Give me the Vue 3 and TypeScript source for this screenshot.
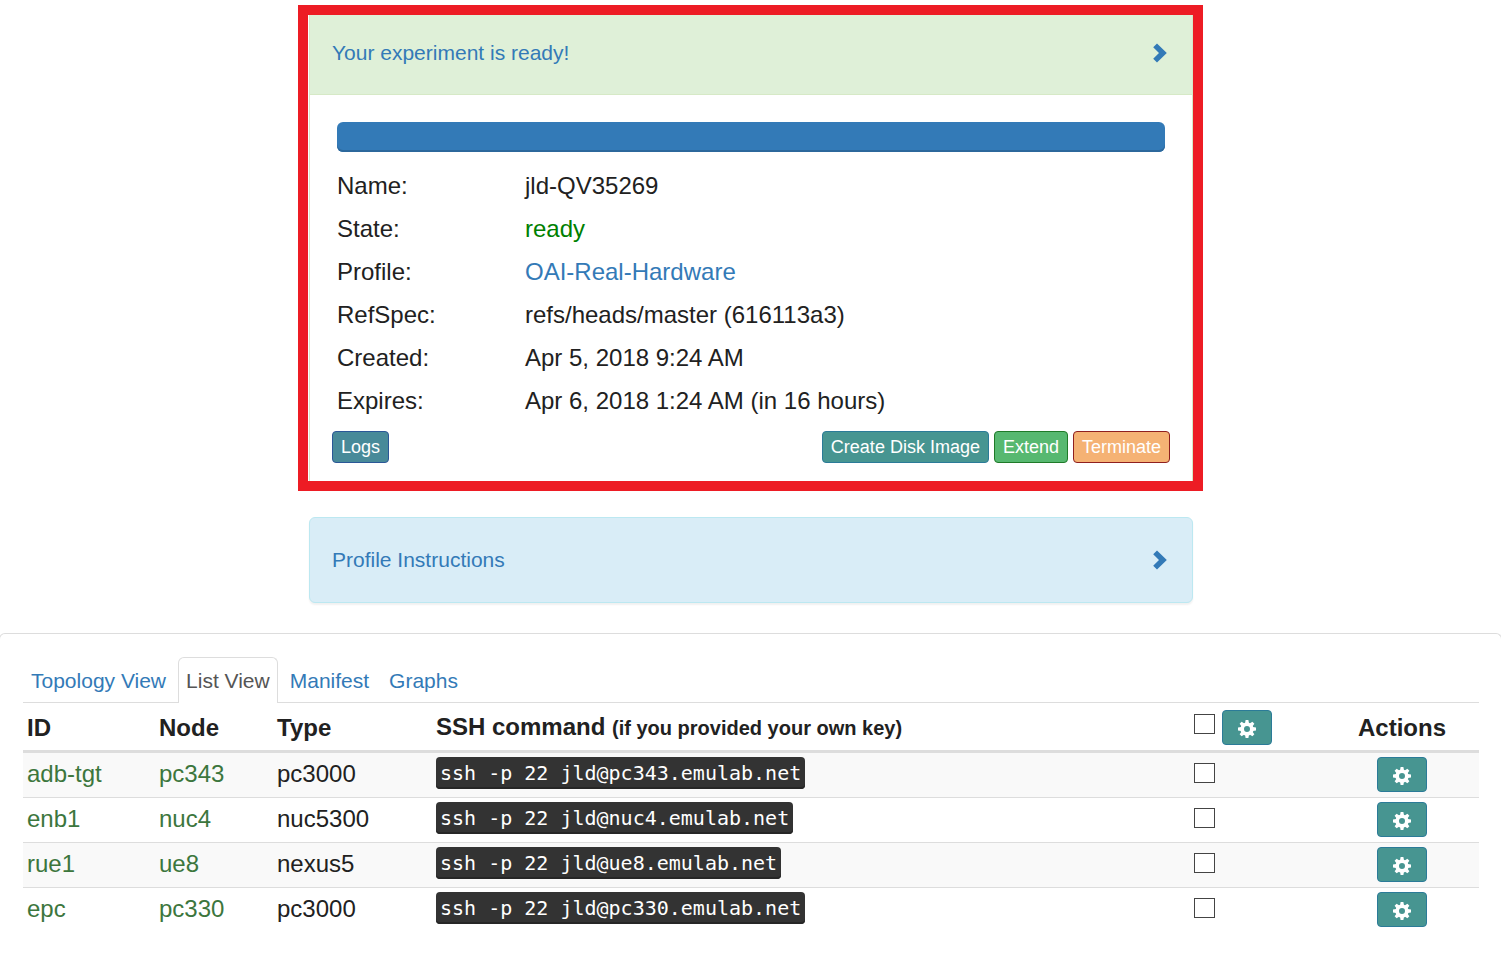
<script setup lang="ts">
import { ref } from 'vue'

interface Detail {
  label: string
  value: string
  kind?: 'ready' | 'link'
}

interface ExperimentNode {
  id: string
  node: string
  type: string
  ssh: string
}

const details: Detail[] = [
  { label: 'Name:', value: 'jld-QV35269' },
  { label: 'State:', value: 'ready', kind: 'ready' },
  { label: 'Profile:', value: 'OAI-Real-Hardware', kind: 'link' },
  { label: 'RefSpec:', value: 'refs/heads/master (616113a3)' },
  { label: 'Created:', value: 'Apr 5, 2018 9:24 AM' },
  { label: 'Expires:', value: 'Apr 6, 2018 1:24 AM (in 16 hours)' },
]

const nodes: ExperimentNode[] = [
  { id: 'adb-tgt', node: 'pc343', type: 'pc3000', ssh: 'ssh -p 22 jld@pc343.emulab.net' },
  { id: 'enb1', node: 'nuc4', type: 'nuc5300', ssh: 'ssh -p 22 jld@nuc4.emulab.net' },
  { id: 'rue1', node: 'ue8', type: 'nexus5', ssh: 'ssh -p 22 jld@ue8.emulab.net' },
  { id: 'epc', node: 'pc330', type: 'pc3000', ssh: 'ssh -p 22 jld@pc330.emulab.net' },
]

const tabs: string[] = ['Topology View', 'List View', 'Manifest', 'Graphs']
const activeTab = ref('List View')
const selected = ref<string[]>([])
const teeth: number[] = [0, 45, 90, 135, 180, 225, 270, 315]

function toggleAll(event: Event): void {
  const on = (event.target as HTMLInputElement).checked
  selected.value = on ? nodes.map((n) => n.id) : []
}
</script>

<template>
  <div class="page">
    <svg class="defs" aria-hidden="true">
      <defs>
        <symbol id="chevron" viewBox="0 0 14 20">
          <path d="M4 0.4 L13.8 10 L4 19.6 L0.2 15.8 L6 10 L0.2 4.2 Z" />
        </symbol>
        <symbol id="gear" viewBox="-9 -9 18 18">
          <circle r="4.8" fill="none" stroke="currentColor" stroke-width="3.6" />
          <path
            v-for="angle in teeth"
            :key="angle"
            d="M-2 -5.8 L-1.4 -9 H1.4 L2 -5.8 Z"
            :transform="`rotate(${angle})`"
          />
        </symbol>
      </defs>
    </svg>

    <section class="status-frame">
      <div class="status-panel">
        <a class="panel-heading success" href="#status">
          <span>Your experiment is ready!</span>
          <svg class="chevron"><use href="#chevron" /></svg>
        </a>
        <div class="status-body">
          <div class="progress" role="progressbar" aria-label="Progress" aria-valuenow="100"></div>
          <dl class="details">
            <div v-for="d in details" :key="d.label" class="detail">
              <dt>{{ d.label }}</dt>
              <dd>
                <a v-if="d.kind === 'link'" href="#profile">{{ d.value }}</a>
                <span v-else :class="d.kind">{{ d.value }}</span>
              </dd>
            </div>
          </dl>
          <div class="actions">
            <button type="button" class="btn logs">Logs</button>
            <button type="button" class="btn teal push">Create Disk Image</button>
            <button type="button" class="btn green">Extend</button>
            <button type="button" class="btn orange">Terminate</button>
          </div>
        </div>
      </div>
    </section>

    <section class="instructions">
      <a class="panel-heading" href="#instructions">
        <span>Profile Instructions</span>
        <svg class="chevron"><use href="#chevron" /></svg>
      </a>
    </section>

    <section class="nodes-panel">
      <nav class="tabs">
        <a
          v-for="t in tabs"
          :key="t"
          href="#tab"
          class="tab"
          :class="{ active: t === activeTab }"
          @click.prevent="activeTab = t"
        >{{ t }}</a>
      </nav>
      <table class="nodes">
        <colgroup>
          <col class="c-id" />
          <col class="c-node" />
          <col class="c-type" />
          <col />
          <col class="c-check" />
          <col class="c-actions" />
        </colgroup>
        <thead>
          <tr>
            <th>ID</th>
            <th>Node</th>
            <th>Type</th>
            <th>SSH command <small>(if you provided your own key)</small></th>
            <th>
              <div class="bulk">
                <input type="checkbox" class="check" aria-label="Select all nodes" @change="toggleAll" />
                <button type="button" class="btn teal cog" aria-label="Actions for selected nodes">
                  <svg class="gear"><use href="#gear" /></svg>
                </button>
              </div>
            </th>
            <th class="center">Actions</th>
          </tr>
        </thead>
        <tbody>
          <tr v-for="n in nodes" :key="n.id">
            <td><a class="node-link" href="#node">{{ n.id }}</a></td>
            <td><a class="node-link" href="#node">{{ n.node }}</a></td>
            <td>{{ n.type }}</td>
            <td><kbd>{{ n.ssh }}</kbd></td>
            <td>
              <input
                v-model="selected"
                type="checkbox"
                class="check"
                :value="n.id"
                :aria-label="`Select ${n.id}`"
              />
            </td>
            <td>
              <button type="button" class="btn teal cog" :aria-label="`Actions for ${n.id}`">
                <svg class="gear"><use href="#gear" /></svg>
              </button>
            </td>
          </tr>
        </tbody>
      </table>
    </section>
  </div>
</template>

<style>
body {
  margin: 0;
  background: #fff;
}
</style>

<style scoped>
.page,
.page * {
  box-sizing: border-box;
}

.page {
  display: flex;
  flex-direction: column;
  min-height: 100vh;
  padding-top: 5px;
  overflow: hidden;
  color: #212121;
  font: 24px/34px "Liberation Sans", Arial, sans-serif;
}

.defs {
  position: absolute;
  width: 0;
  height: 0;
}

a {
  color: #337ab7;
  text-decoration: none;
}

.status-frame {
  margin: 0 298px;
  border: 10px solid #ed1c24;
  padding-left: 1px;
}

.status-panel {
  border: solid #d6e9c6;
  border-width: 0 1px;
}

.panel-heading {
  display: flex;
  align-items: center;
  justify-content: space-between;
  padding: 0 25px 0 22px;
  height: 84px;
  font-size: 21px;
  line-height: 24px;
}

.panel-heading.success {
  height: 80px;
  padding-bottom: 3px;
  background: #dff0d8;
  border-bottom: 1px solid #d6e9c6;
}

.chevron {
  width: 14px;
  height: 20px;
  fill: #337ab7;
}

.status-body {
  padding: 27px 22px 18px;
}

.progress {
  height: 30px;
  margin: 0 5px 12px;
  border-radius: 6px;
  background: #337ab7;
  box-shadow: inset 0 -2px 0 #2c689c;
}

.details {
  margin: 0 5px;
}

.detail {
  display: flex;
  height: 43px;
  line-height: 43px;
}

dt {
  width: 188px;
}

dd {
  margin: 0;
}

.ready {
  color: #008000;
}

.actions {
  display: flex;
  gap: 5px;
  padding-top: 9px;
}

.btn {
  height: 32px;
  padding: 0 8px;
  border: 1px solid;
  border-radius: 4px;
  color: #fff;
  font: 18px/28px "Liberation Sans", Arial, sans-serif;
  cursor: pointer;
}

.push {
  margin-left: auto;
}

.logs {
  background: #488a99;
  border-color: #2b5797;
}

.teal {
  background: #479591;
  border-color: #2b7b98;
}

.green {
  background: #57b870;
  border-color: #1f7a28;
}

.orange {
  background: #f5b274;
  border-color: #8f1f1f;
}

.instructions {
  margin: 26px 308px 30px 309px;
  border: 1px solid #bce8f1;
  border-radius: 6px;
  background: #d9edf7;
  box-shadow: 0 2px 2px rgba(0, 0, 0, 0.06);
}

.nodes-panel {
  flex: 1;
  margin: 0 -1px;
  padding: 23px 22px 23px 23px;
  border: 1px solid #ddd;
  border-bottom: 0;
  border-radius: 6px 6px 0 0;
}

.tabs {
  display: flex;
  gap: 4px;
  border-bottom: 1px solid #ddd;
}

.tab {
  height: 46px;
  margin-bottom: -1px;
  padding: 0 7px;
  border: 1px solid transparent;
  border-bottom: 0;
  border-radius: 6px 6px 0 0;
  font-size: 21px;
  line-height: 46px;
}

.tab.active {
  color: #555;
  border-color: #ddd;
  background: #fff;
}

.nodes {
  width: 100%;
  table-layout: fixed;
  border-collapse: separate;
  border-spacing: 0;
}

.c-id {
  width: 132px;
}

.c-node {
  width: 118px;
}

.c-type {
  width: 159px;
}

.c-check {
  width: 135px;
}

.c-actions {
  width: 154px;
}

th {
  height: 50px;
  padding: 5px 4px 3px;
  border-bottom: 3px solid #ddd;
  text-align: left;
  white-space: nowrap;
}

th small {
  font-size: 20px;
}

.center {
  text-align: center;
}

td {
  height: 45px;
  padding: 4px;
  border-bottom: 1px solid #ddd;
  vertical-align: top;
}

tbody tr:nth-child(odd) {
  background: #f9f9f9;
}

tbody tr:last-child td {
  border-bottom: 0;
}

.node-link {
  color: #3c763d;
}

kbd {
  display: block;
  width: fit-content;
  height: 32px;
  padding: 0 4px;
  border-radius: 4px;
  background: #333;
  box-shadow: inset 0 -2px 0 #262626;
  color: #fff;
  font: 20px/32px "DejaVu Sans Mono", "Liberation Mono", monospace;
  white-space: nowrap;
}

.check {
  appearance: none;
  display: block;
  width: 21px;
  height: 20px;
  margin: 6px 0 0;
  border: 1px solid #444;
  background: #fff;
}

.check:checked {
  background: #479591;
}

.bulk {
  display: flex;
  align-items: flex-start;
  gap: 7px;
}

.bulk .check {
  margin-top: 4px;
}

.cog {
  display: flex;
  align-items: center;
  justify-content: center;
  width: 50px;
  height: 35px;
  padding: 2px 0 0;
}

td .cog {
  margin: 0 auto;
}

.gear {
  width: 18px;
  height: 18px;
  color: #fff;
  fill: #fff;
}
</style>
